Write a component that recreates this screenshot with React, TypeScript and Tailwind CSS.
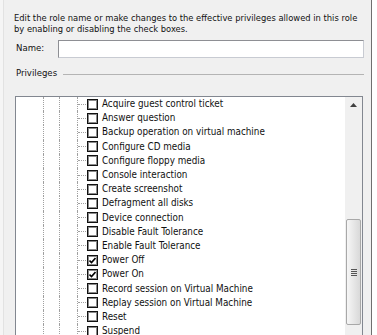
import React from "react";

const rows: { label: string; checked?: boolean }[] = [
  { label: "Acquire guest control ticket" },
  { label: "Answer question" },
  { label: "Backup operation on virtual machine" },
  { label: "Configure CD media" },
  { label: "Configure floppy media" },
  { label: "Console interaction" },
  { label: "Create screenshot" },
  { label: "Defragment all disks" },
  { label: "Device connection" },
  { label: "Disable Fault Tolerance" },
  { label: "Enable Fault Tolerance" },
  { label: "Power Off", checked: true },
  { label: "Power On", checked: true },
  { label: "Record session on Virtual Machine" },
  { label: "Replay session on Virtual Machine" },
  { label: "Reset" },
  { label: "Suspend" },
];

function Row({ label, checked }: { label: string; checked?: boolean }) {
  return (
    <div className="flex h-[14.2px] items-center">
      <div className="h-full w-[27px] shrink-0" />
      <div className="h-full w-[16px] shrink-0 border-l border-dotted border-[#a0a0a0]" />
      <div className="h-full w-[18px] shrink-0 border-l border-dotted border-[#a0a0a0]" />
      <div className="flex h-full w-[10px] shrink-0 items-center border-l border-dotted border-[#a0a0a0]">
        <div className="w-[8px] border-t border-dotted border-[#a0a0a0]" />
      </div>
      <div className="flex h-[11px] w-[11px] shrink-0 items-center justify-center border border-[#111] bg-white shadow-[inset_0_0_0_1px_#8a8a8a]">
        {checked && (
          <svg width="7" height="7" viewBox="0 0 7 7">
            <path d="M0.5 3.5 L2.5 5.5 L6.5 1" stroke="#000" strokeWidth="1.6" fill="none" />
          </svg>
        )}
      </div>
      <span className="ml-[4px] whitespace-nowrap text-[9.8px] leading-[12px] text-[#111]">{label}</span>
    </div>
  );
}

export default function App() {
  return (
    <div
      className="flex h-[335px] w-[377px] overflow-hidden bg-[#f0f0f0] text-black"
      style={{ fontFamily: '"DejaVu Sans Condensed", "Liberation Sans", sans-serif' }}
    >
      <div className="h-full w-[4px] shrink-0 border-r border-[#e2e2e2] bg-[#f5f5f5]" />
      <div className="flex w-[367px] shrink-0 flex-col">
        <div className="pl-[10px] pt-[12px] text-[9.3px] leading-[11px] text-[#111]">
          <div className="whitespace-nowrap">Edit the role name or make changes to the effective privileges allowed in this role</div>
          <div>by enabling or disabling the check boxes.</div>
        </div>
        <div className="mt-[6px] flex items-start pl-[12px]">
          <div className="mt-[2px] w-[42px] text-[9.5px] leading-[12px] text-[#111]">Name:</div>
          <div className="h-[18px] w-[306px] border border-[#c8cbd2] border-l-[#8e8f94] border-t-[#8e8f94] bg-white" />
        </div>
        <div className="mt-[9px] flex h-[12px] items-start pl-[12px]">
          <div className="text-[9.5px] leading-[12px] text-[#111]">Privileges</div>
          <div className="ml-[6px] mt-[7px] h-[1px] w-[301px] bg-[#b4b4b4]" />
        </div>
        <div className="ml-[11px] mt-[17px] flex h-[260px] w-[348px] border border-[#828790] bg-white">
          <div className="flex flex-1 flex-col">
            {rows.map((r) => (
              <Row key={r.label} label={r.label} checked={r.checked} />
            ))}
          </div>
          <div className="flex w-[17px] shrink-0 flex-col items-center bg-[#f0f0f0]">
            <svg width="7" height="4" viewBox="0 0 7 4" className="mt-[6px]">
              <path d="M0 4 L3.5 0 L7 4 Z" fill="#404040" />
            </svg>
            <div className="mt-[112px] flex h-[106px] w-[15px] items-center justify-center rounded-[2px] border border-[#a8a8a8] bg-gradient-to-r from-[#f6f6f6] to-[#d9d9d9]">
              <div className="flex flex-col gap-[1px]">
                <div className="h-[1px] w-[6px] bg-[#555]" />
                <div className="h-[1px] w-[6px] bg-[#555]" />
                <div className="h-[1px] w-[6px] bg-[#555]" />
                <div className="h-[1px] w-[6px] bg-[#555]" />
              </div>
            </div>
          </div>
        </div>
      </div>
      <div className="h-full w-[1px] shrink-0 bg-[#6f6f6f]" />
      <div className="h-full flex-1 bg-white" />
    </div>
  );
}
